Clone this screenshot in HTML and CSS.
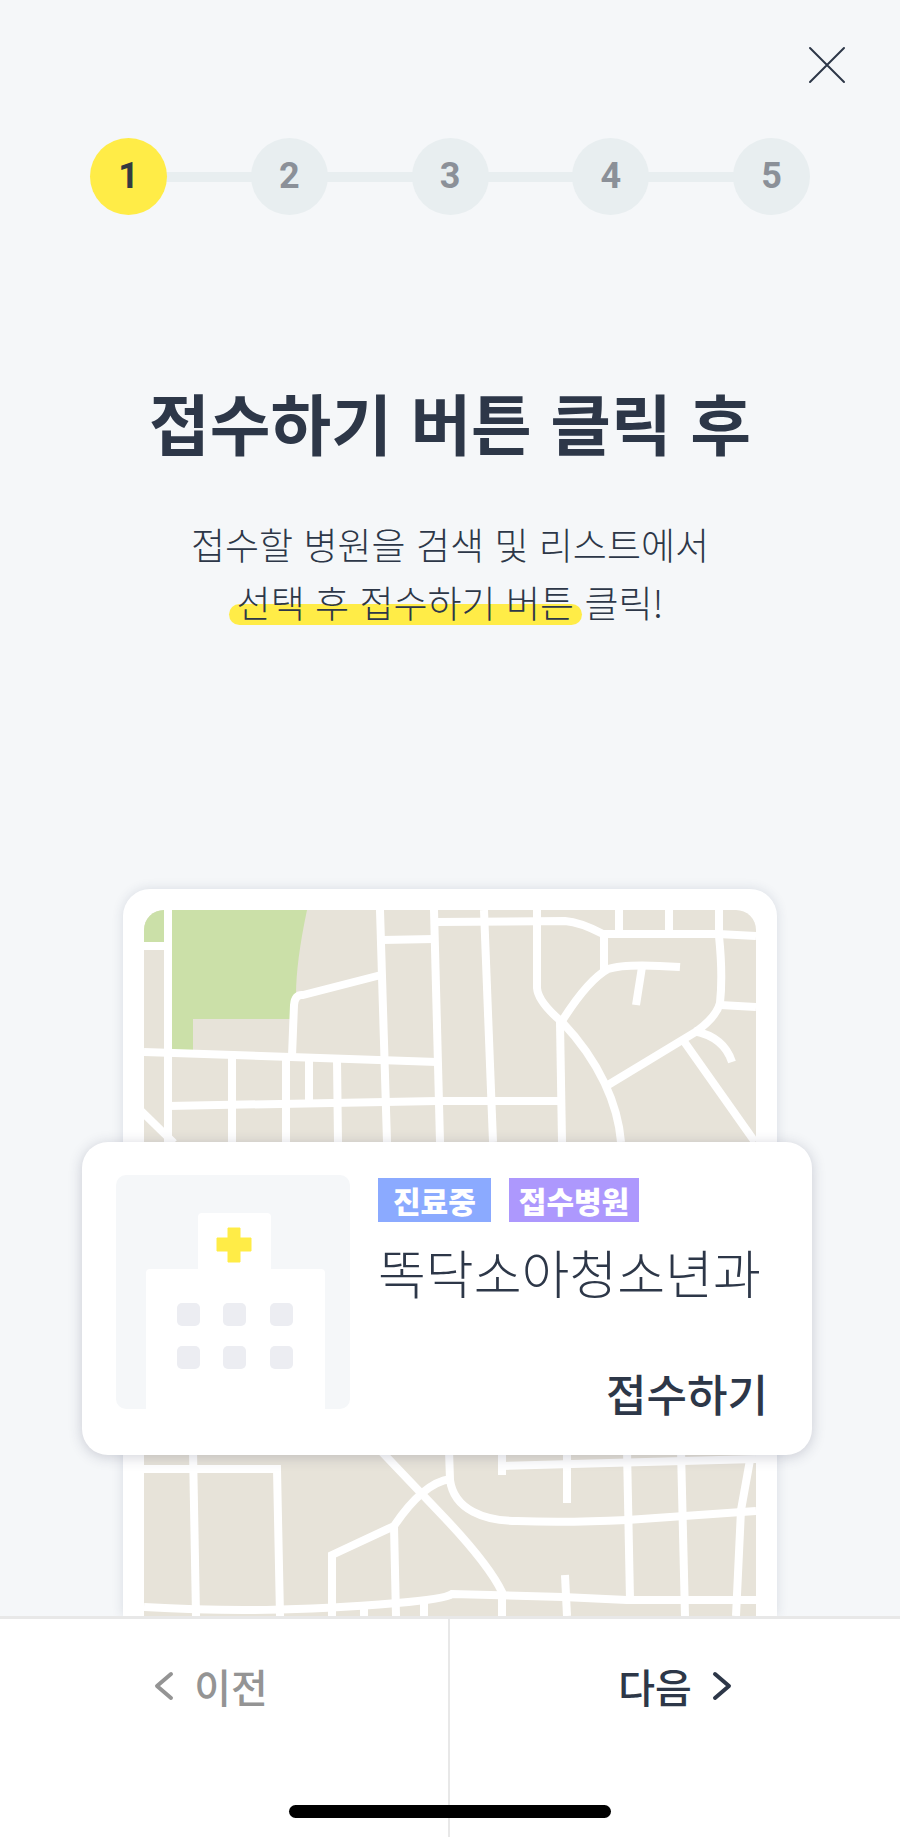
FILE: index.html
```
<!DOCTYPE html>
<html lang="ko">
  <head>
    <meta charset="UTF-8" />
    <meta name="viewport" content="width=device-width, initial-scale=1.0" />
    <title>접수 안내</title>
    <link rel="stylesheet" href="styles.css">
  </head>
  <body>
    <header class="top-bar">
      <button type="button" class="close-btn" aria-label="닫기">
        <svg viewBox="0 0 42 42" aria-hidden="true"><path d="M4 4 L38 38 M38 4 L4 38" /></svg>
      </button>
    </header>

    <main class="guide">
      <ol class="steps">
        <li class="step active" aria-current="step">1</li>
        <li class="step">2</li>
        <li class="step">3</li>
        <li class="step">4</li>
        <li class="step">5</li>
      </ol>

      <h1 class="title">접수하기 버튼 클릭 후</h1>
      <p class="desc">
        접수할 병원을 검색 및 리스트에서<br />
        <span class="mark">선택 후 접수하기 버튼</span> 클릭!
      </p>

      <div class="preview">
        <div class="map">
          <svg viewBox="144 910 612 706" aria-hidden="true">
            <rect class="land" x="144" y="910" width="612" height="706" />
            <path class="park" d="M144 910 H307 Q296 962 296 995 L291 1019 H193 V1052 H168 V946 H144 Z" />

            <!-- upper roads -->
            <g class="road">
              <path d="M168 910 V1142" />
              <path d="M144 946 H168" />
              <path d="M292 1056 L294 1005 Q295 994 303 995 L381 975" />
              <path d="M380 910 L387 1142" />
              <path d="M382 940 L434 939" />
              <path d="M434 910 L440 1142" />
              <path d="M436 922 L565 921 Q580 922 603 934 H718 L756 936" />
              <path d="M144 1052 L437 1062" />
              <path d="M168 1106 L437 1101 H561" />
              <path d="M232 1056 V1142 M286 1058 V1142 M309 1058 V1103 M337 1060 L338 1142" />
              <path d="M136 1106 L174 1143" />
              <path d="M484 910 L493 1142" />
              <path d="M537 910 V988 C538 1000 550 1012 562 1022 C600 1062 618 1105 621 1142" />
              <path d="M560 1022 L562 1142" />
              <path d="M619 910 V934 M669 910 V934" />
              <path d="M719 910 V936 Q723 975 720 1003 Q716 1018 694 1033 L608 1085" />
              <path d="M604 934 V970" />
              <path d="M562 1021 Q588 980 608 969 Q625 963 680 967" />
              <path d="M642 967 L636 1005" />
              <path d="M720 1005 L756 1007" />
              <path d="M694 1031 Q724 1037 732 1062" />
              <path d="M683 1040 L755 1142" />
            </g>

            <!-- lower roads -->
            <g class="road">
              <path d="M193 1450 L196 1616" />
              <path d="M144 1469 H277 L280 1616" />
              <path d="M380 1450 L440 1513 Q488 1563 502 1592 V1616" />
              <path d="M449 1450 L450 1480 C454 1510 485 1521 517 1521 Q565 1523 627 1520 L756 1511" />
              <path d="M450 1479 Q423 1483 394 1526 L332 1555 V1616" />
              <path d="M394 1526 L396 1616" />
              <path d="M144 1607 C230 1612 300 1611 397 1603 Q445 1599 452 1594 L563 1597 L627 1600 H756" />
              <path d="M364 1607 V1616 M424 1602 V1616" />
              <path d="M502 1450 V1475" />
              <path d="M502 1466 L756 1459" />
              <path d="M567 1450 V1503" />
              <path d="M627 1450 L630 1600" />
              <path d="M681 1450 L685 1616" />
              <path d="M750 1460 L741 1510 L736 1616" />
              <path d="M565 1575 L567 1616" />
            </g>
          </svg>
        </div>

        <section class="hospital">
          <svg class="hospital-img" viewBox="0 0 234 234" aria-hidden="true">
            <rect width="234" height="234" rx="10" fill="#f5f7f9" />
            <path d="M30 235 V98 Q30 94 34 94 H82 V42 Q82 38 86 38 H151 Q155 38 155 42 V94 H205 Q209 94 209 98 V235 Z" fill="#fff" />
            <path d="M112 53 H124 V63 H135 V76 H124 V87 H112 V76 H101 V63 H112 Z" fill="#ffec47" stroke="#ffec47" stroke-width="1" stroke-linejoin="round" />
            <g fill="#ecedf2">
              <rect x="61" y="128" width="23" height="23" rx="5" />
              <rect x="107" y="128" width="23" height="23" rx="5" />
              <rect x="154" y="128" width="23" height="23" rx="5" />
              <rect x="61" y="171" width="23" height="23" rx="5" />
              <rect x="107" y="171" width="23" height="23" rx="5" />
              <rect x="154" y="171" width="23" height="23" rx="5" />
            </g>
          </svg>
          <div class="hospital-info">
            <div class="badges">
              <span class="badge open">진료중</span>
              <span class="badge receipt">접수병원</span>
            </div>
            <h2 class="hospital-name">똑닥소아청소년과</h2>
            <button type="button" class="receipt-btn">접수하기</button>
          </div>
        </section>
      </div>
    </main>

    <nav class="bottom-nav">
      <button type="button" class="nav-btn prev">
        <svg viewBox="0 0 20 30" aria-hidden="true"><path d="M17 3 L3 15 L17 27" /></svg>
        이전
      </button>
      <button type="button" class="nav-btn next">
        다음
        <svg viewBox="0 0 20 30" aria-hidden="true"><path d="M3 3 L17 15 L3 27" /></svg>
      </button>
      <div class="home-bar"></div>
    </nav>
  </body>
</html>
```
FILE: styles.css
```
* {
  margin: 0;
  padding: 0;
  box-sizing: border-box;
}
body {
  display: flex;
  flex-direction: column;
  min-height: 100vh;
  background: #f5f7f9;
  color: #2d3748;
  font-family: "Noto Sans CJK KR", sans-serif;
}
button {
  border: none;
  background: none;
  color: inherit;
  font-family: inherit;
  cursor: pointer;
}
svg {
  display: block;
}

.top-bar {
  display: flex;
  justify-content: flex-end;
  padding: 44px 52px;
}
.close-btn {
  width: 42px;
  height: 42px;
}
.close-btn path {
  fill: none;
  stroke: #2d3748;
  stroke-width: 2;
  stroke-linecap: round;
}

.guide {
  flex: 1;
  display: flex;
  flex-direction: column;
  padding-top: 8px;
}

/* step indicator */
.steps {
  display: flex;
  justify-content: space-between;
  margin: 0 90px;
  list-style: none;
  background: linear-gradient(#e8eef0, #e8eef0) center / 98% 10px no-repeat;
}
.step {
  width: 77px;
  height: 77px;
  border-radius: 50%;
  background: #e8eef0;
  color: #8b9098;
  font-family: Roboto, sans-serif;
  font-size: 36px;
  font-weight: 700;
  line-height: 76px;
  text-align: center;
}
.step.active {
  background: #ffec47;
  color: #333a40;
}

.title {
  margin-top: 166px;
  font-size: 66px;
  font-weight: 700;
  line-height: 80px;
  text-align: center;
}
.desc {
  margin-top: 54px;
  font-size: 37px;
  font-weight: 300;
  line-height: 58px;
  text-align: center;
}
.mark {
  position: relative;
  z-index: 0;
}
.mark::before {
  content: "";
  position: absolute;
  z-index: -1;
  right: -8px;
  bottom: 4px;
  left: -8px;
  height: 21px;
  border-radius: 11px;
  background: #ffec47;
}

/* map preview with the hospital card on top */
.preview {
  flex: 1;
  display: grid;
  margin-top: 258px;
  padding: 0 88px 0 82px;
}
.map,
.hospital {
  grid-area: 1 / 1;
}
.map {
  margin: 0 35px 0 41px;
  padding: 21px 21px 0;
  border-radius: 27px 27px 0 0;
  background: #fff;
  box-shadow: 0 0 12px rgba(45, 55, 90, 0.14);
}
.map svg {
  width: 100%;
  border-radius: 20px 20px 0 0;
}
.land {
  fill: #e7e3d9;
}
.park {
  fill: #cbe0a8;
}
.road {
  fill: none;
  stroke: #fff;
  stroke-width: 8;
}

.hospital {
  align-self: start;
  display: flex;
  gap: 28px;
  margin-top: 253px;
  padding: 33px 44px 32px 34px;
  border-radius: 26px;
  background: #fff;
  box-shadow: 0 2px 14px rgba(45, 50, 80, 0.22);
  z-index: 1;
}
.hospital-img {
  flex: none;
  width: 234px;
  height: 234px;
}
.hospital-info {
  flex: 1;
  display: flex;
  flex-direction: column;
  min-height: 248px;
}
.badges {
  display: flex;
  gap: 18px;
  padding-top: 3px;
}
.badge {
  padding: 0 10px;
  color: #fff;
  font-size: 30px;
  font-weight: 900;
  line-height: 44px;
}
.badge.open {
  padding: 0 15px;
  background: #8baaff;
}
.badge.receipt {
  background: #ad98fd;
}
.hospital-name {
  margin-top: 20px;
  font-size: 52px;
  font-weight: 300;
  line-height: 60px;
  white-space: nowrap;
}
.receipt-btn {
  align-self: flex-end;
  margin-top: auto;
  font-size: 44px;
  font-weight: 500;
  line-height: 60px;
}

/* bottom navigation */
.bottom-nav {
  position: relative;
  display: flex;
  height: 221px;
  border-top: 3px solid #e8e8e8;
  background: #fff;
}
.nav-btn {
  width: 50%;
  display: flex;
  justify-content: center;
  align-items: center;
  gap: 20px;
  padding-bottom: 84px;
  font-size: 40px;
  font-weight: 500;
  line-height: 60px;
}
.nav-btn svg {
  width: 20px;
  height: 30px;
  fill: none;
  stroke: currentColor;
  stroke-width: 4;
  stroke-linecap: round;
  stroke-linejoin: round;
}
.prev {
  padding-right: 26px;
  border-right: 2px solid #e8e8e8;
  color: #949494;
}
.home-bar {
  position: absolute;
  bottom: 19px;
  left: 50%;
  width: 322px;
  height: 13px;
  border-radius: 7px;
  background: #000;
  transform: translateX(-50%);
}
```
